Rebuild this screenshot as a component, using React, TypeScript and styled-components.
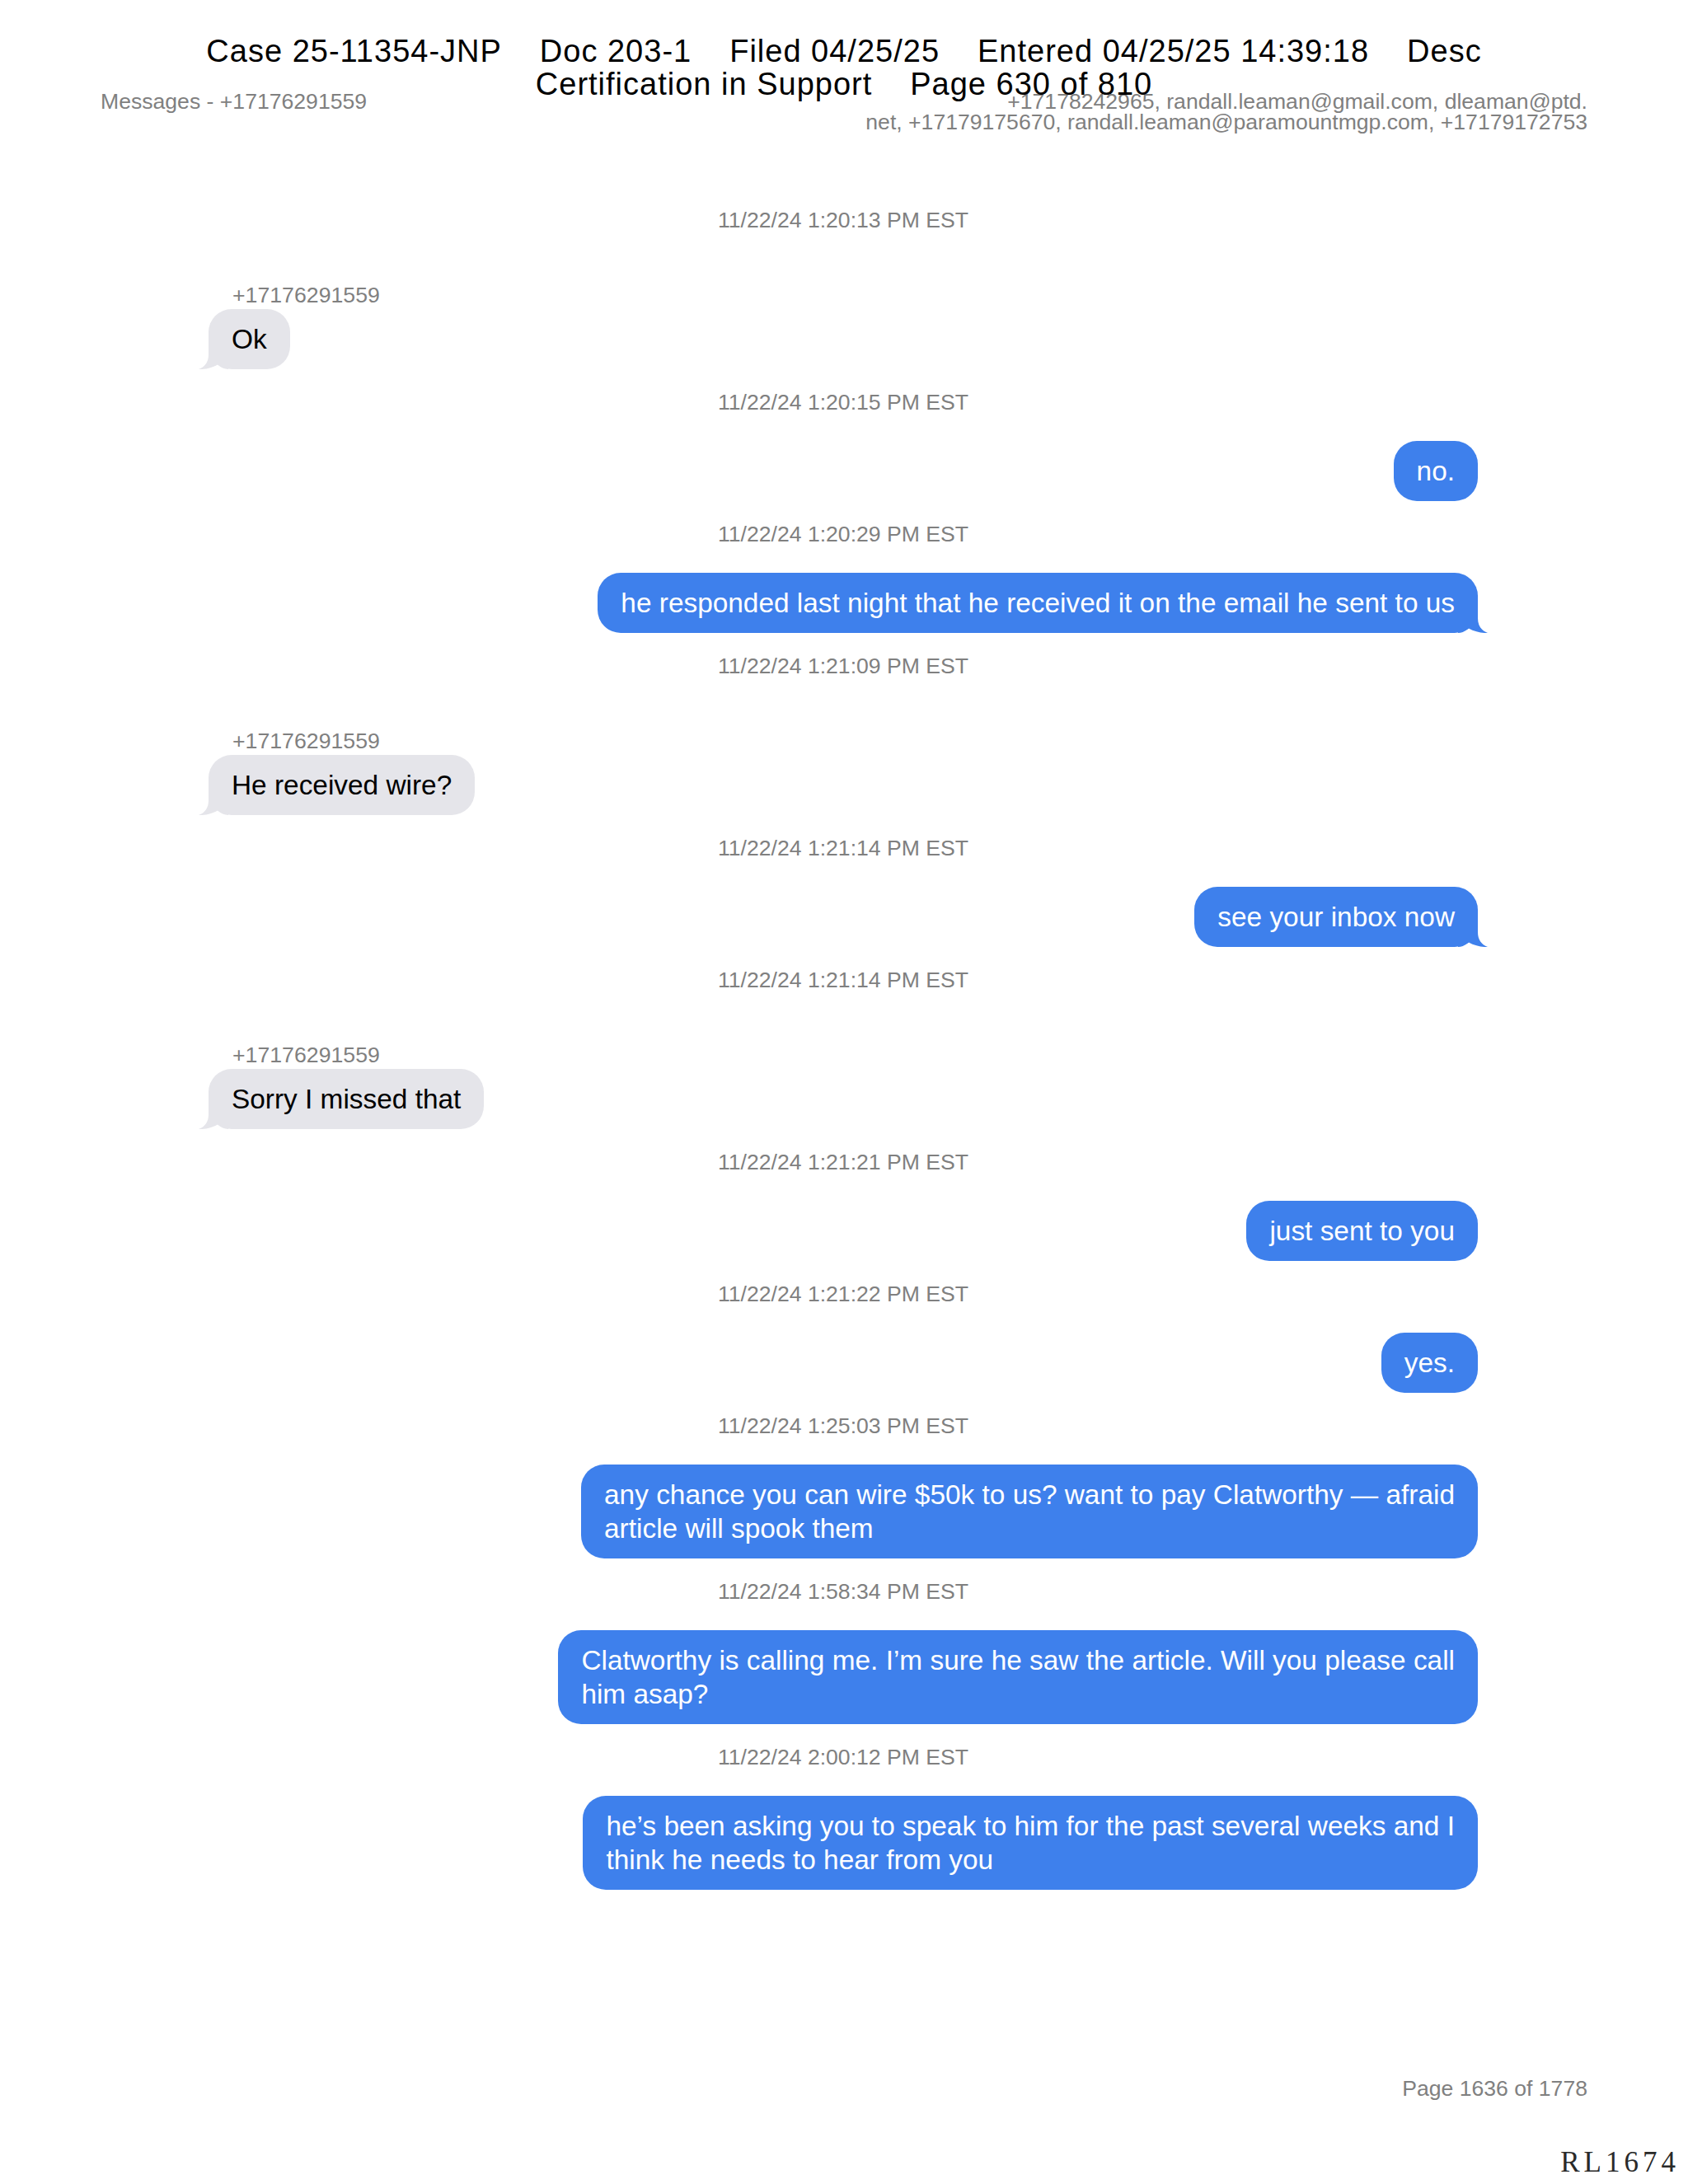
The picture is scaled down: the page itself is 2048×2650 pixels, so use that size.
import React from "react";
import styled, { createGlobalStyle } from "styled-components";

const GlobalStyle = createGlobalStyle`
  html, body {
    margin: 0;
    padding: 0;
    background: #ffffff;
  }
  body {
    font-family: "Liberation Sans", Arial, Helvetica, sans-serif;
  }
`;

const Page = styled.div`
  position: relative;
  width: 2048px;
  min-height: 2650px;
  box-sizing: border-box;
  padding-bottom: 6px;
  display: flex;
  flex-direction: column;
  background: #ffffff;
  font-family: "Liberation Sans", Arial, Helvetica, sans-serif;
`;

const Stamp = styled.div`
  position: absolute;
  top: 0;
  left: 0;
  right: 0;
  padding-top: 42px;
  display: flex;
  flex-direction: column;
  align-items: center;
  color: #000000;
  font-size: 38px;
  line-height: 40px;
  letter-spacing: 1px;
  pointer-events: none;
`;

const StampLine = styled.div`
  display: flex;
  gap: 46px;
  white-space: nowrap;
`;

const HeaderRow = styled.header`
  display: flex;
  justify-content: space-between;
  align-items: flex-start;
  padding: 111px 122px 0;
  color: #808080;
  font-size: 26.6px;
  line-height: 25px;
`;

const HeaderLeft = styled.div`
  white-space: nowrap;
`;

const HeaderRight = styled.div`
  text-align: right;
  white-space: nowrap;
`;

const Thread = styled.main`
  display: flex;
  flex-direction: column;
  gap: 25px;
  margin-top: 91px;
  padding: 0 255px 0 253px;
`;

const Group = styled.section`
  display: flex;
  flex-direction: column;
`;

const Timestamp = styled.div`
  text-align: center;
  color: #808080;
  font-size: 26.6px;
  line-height: 30px;
  height: 30px;
`;

const Row = styled.div<{ $out: boolean }>`
  display: flex;
  justify-content: ${(p) => (p.$out ? "flex-end" : "flex-start")};
  margin-top: ${(p) => (p.$out ? "32px" : "61px")};
`;

const Incoming = styled.div`
  display: flex;
  flex-direction: column;
  align-items: flex-start;
`;

const Sender = styled.div`
  color: #808080;
  font-size: 26.7px;
  line-height: 30px;
  padding-left: 29px;
  margin-bottom: 2px;
`;

const Bubble = styled.div<{ $out: boolean }>`
  position: relative;
  box-sizing: border-box;
  padding: 16px 28px;
  border-radius: 28px;
  font-size: 33.4px;
  line-height: 41px;
  white-space: nowrap;
  background: ${(p) => (p.$out ? "#3e80ec" : "#e5e5ea")};
  color: ${(p) => (p.$out ? "#ffffff" : "#000000")};
`;

const TailSvg = styled.svg<{ $out: boolean }>`
  position: absolute;
  bottom: 0;
  width: 36px;
  height: 30px;
  ${(p) =>
    p.$out
      ? "right: -12px;"
      : "left: -12px; transform: scaleX(-1);"}
`;

const Tail: React.FC<{ out: boolean }> = ({ out }) => (
  <TailSvg $out={out} viewBox="0 0 36 30" aria-hidden="true">
    <path
      d="M24 0 L24 12 C24 21 28 27 36 30 C30 30.5 20 28.5 13 24.5 C9 27.5 5 30 0 30 L0 0 Z"
      fill={out ? "#3e80ec" : "#e5e5ea"}
    />
  </TailSvg>
);

const Footer = styled.footer`
  margin-top: auto;
  display: flex;
  flex-direction: column;
  align-items: flex-end;
  gap: 55px;
`;

const PageNumber = styled.div`
  color: #808080;
  font-size: 26.6px;
  line-height: 30px;
  padding-right: 122px;
`;

const Bates = styled.div`
  font-family: "Liberation Serif", "Times New Roman", serif;
  color: #2a2a2a;
  font-size: 35px;
  line-height: 40px;
  letter-spacing: 5px;
  padding-right: 10px;
`;

type Message = {
  ts: string;
  out: boolean;
  lines: string[];
  tail?: boolean;
  sender?: string;
};

const SENDER = "+17176291559";

const messages: Message[] = [
  { ts: "11/22/24 1:20:13 PM EST", out: false, lines: ["Ok"], tail: true, sender: SENDER },
  { ts: "11/22/24 1:20:15 PM EST", out: true, lines: ["no."] },
  {
    ts: "11/22/24 1:20:29 PM EST",
    out: true,
    lines: ["he responded last night that he received it on the email he sent to us"],
    tail: true,
  },
  { ts: "11/22/24 1:21:09 PM EST", out: false, lines: ["He received wire?"], tail: true, sender: SENDER },
  { ts: "11/22/24 1:21:14 PM EST", out: true, lines: ["see your inbox now"], tail: true },
  { ts: "11/22/24 1:21:14 PM EST", out: false, lines: ["Sorry I missed that"], tail: true, sender: SENDER },
  { ts: "11/22/24 1:21:21 PM EST", out: true, lines: ["just sent to you"] },
  { ts: "11/22/24 1:21:22 PM EST", out: true, lines: ["yes."] },
  {
    ts: "11/22/24 1:25:03 PM EST",
    out: true,
    lines: [
      "any chance you can wire $50k to us? want to pay Clatworthy \u2014 afraid",
      "article will spook them",
    ],
  },
  {
    ts: "11/22/24 1:58:34 PM EST",
    out: true,
    lines: [
      "Clatworthy is calling me. I\u2019m sure he saw the article. Will you please call",
      "him asap?",
    ],
  },
  {
    ts: "11/22/24 2:00:12 PM EST",
    out: true,
    lines: [
      "he\u2019s been asking you to speak to him for the past several weeks and I",
      "think he needs to hear from you",
    ],
  },
];

const MessageGroup: React.FC<{ m: Message }> = ({ m }) => {
  const bubble = (
    <Bubble $out={m.out}>
      {m.tail && <Tail out={m.out} />}
      {m.lines.map((line, i) => (
        <React.Fragment key={i}>
          {i > 0 && <br />}
          {line}
        </React.Fragment>
      ))}
    </Bubble>
  );
  return (
    <Group>
      <Timestamp>{m.ts}</Timestamp>
      <Row $out={m.out}>
        {m.out ? (
          bubble
        ) : (
          <Incoming>
            <Sender>{m.sender}</Sender>
            {bubble}
          </Incoming>
        )}
      </Row>
    </Group>
  );
};

export default function App() {
  return (
    <>
      <GlobalStyle />
      <Page>
        <HeaderRow>
          <HeaderLeft>Messages - +17176291559</HeaderLeft>
          <HeaderRight>
            +17178242965, randall.leaman@gmail.com, dleaman@ptd.
            <br />
            net, +17179175670, randall.leaman@paramountmgp.com, +17179172753
          </HeaderRight>
        </HeaderRow>

        <Thread>
          {messages.map((m, i) => (
            <MessageGroup key={i} m={m} />
          ))}
        </Thread>

        <Footer>
          <PageNumber>Page 1636 of 1778</PageNumber>
          <Bates>RL1674</Bates>
        </Footer>

        <Stamp>
          <StampLine>
            <span>Case 25-11354-JNP</span>
            <span>Doc 203-1</span>
            <span>Filed 04/25/25</span>
            <span>Entered 04/25/25 14:39:18</span>
            <span>Desc</span>
          </StampLine>
          <StampLine>
            <span>Certification in Support</span>
            <span>Page 630 of 810</span>
          </StampLine>
        </Stamp>
      </Page>
    </>
  );
}
